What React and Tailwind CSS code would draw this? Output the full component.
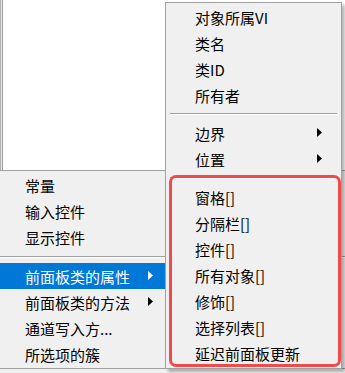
import React from "react";

const font = { fontFamily: '"Noto Sans CJK SC", "Noto Sans", sans-serif' };

function Arrow({ white }) {
  return (
    <svg width="5" height="9" viewBox="0 0 5 9" className="shrink-0">
      <path d="M0 0 L5 4.5 L0 9 Z" fill={white ? "#ffffff" : "#000000"} />
    </svg>
  );
}

function Row({ label, arrow, active, arrowX }) {
  return (
    <div
      className={`relative h-[26px] flex items-center text-[15px] leading-none ${
        active ? "bg-[#0078d7] text-white" : "text-black"
      }`}
    >
      <span className="whitespace-nowrap">{label}</span>
      {arrow && (
        <span className={`absolute top-[8px] ${arrowX}`}>
          <Arrow white={active} />
        </span>
      )}
    </div>
  );
}

function Sep({ h, inset }) {
  return (
    <div className={`flex flex-col justify-center ${h} ${inset}`}>
      <div className="h-px bg-[#a0a0a0]" />
      <div className="h-px bg-white" />
    </div>
  );
}

export default function App() {
  return (
    <div
      className="relative w-[345px] h-[373px] overflow-hidden bg-white"
      style={font}
    >
      {/* top white canvas area */}
      <div className="flex h-[170px]">
        <div className="w-px bg-[#b4b4b4]" />
        <div className="w-px bg-[#e4e4e4]" />
        <div className="w-px bg-[#a0a0a0]" />
        <div className="flex-1 bg-white" />
      </div>
      <div className="h-px bg-[#a0a0a0]" />

      {/* parent menu */}
      <div className="bg-[#f0f0f0] h-[202px] flex flex-col">
        <div className="pt-[1px]">
          <div className="pl-[25px]">
            <Row label="常量" />
            <Row label="输入控件" />
            <Row label="显示控件" />
          </div>
          <Sep h="h-[13px]" inset="" />
          <div className="w-[165px]">
            <div className="pl-[25px] bg-[#0078d7]">
              <Row label="前面板类的属性" arrow active arrowX="left-[123px]" />
            </div>
            <div className="pl-[25px]">
              <Row label="前面板类的方法" arrow arrowX="left-[123px]" />
              <Row label="通道写入方..." />
              <Row label="所选项的簇" />
            </div>
          </div>
        </div>
        <div className="mt-[1px] h-px bg-[#a0a0a0]" />
        <div className="flex-1 bg-[#f0f0f0]" />
      </div>

      {/* submenu popup */}
      <div className="absolute left-[165px] top-[2px] w-[177px] h-[367px] border border-[#a0a0a0] bg-[#f0f0f0] shadow-[3px_3px_3px_rgba(0,0,0,0.28)]">
        <div className="pt-[1px]">
          <div className="pl-[29px]">
            <Row label="对象所属VI" />
            <Row label="类名" />
            <Row label="类ID" />
            <Row label="所有者" />
          </div>
          <Sep h="h-[12px]" inset="mx-[4px]" />
          <div className="pl-[29px]">
            <Row label="边界" arrow arrowX="left-[122px]" />
            <Row label="位置" arrow arrowX="left-[122px]" />
          </div>
          <Sep h="h-[12px]" inset="mx-[4px]" />
          <div className="pl-[29px]">
            <Row label="窗格[]" />
            <Row label="分隔栏[]" />
            <Row label="控件[]" />
            <Row label="所有对象[]" />
            <Row label="修饰[]" />
            <Row label="选择列表[]" />
            <Row label="延迟前面板更新" />
          </div>
        </div>
      </div>

      {/* red annotation box */}
      <div className="absolute left-[169px] top-[175px] w-[172px] h-[192px] border-[3px] border-[#f14a4a] rounded-[7px]" />
    </div>
  );
}
